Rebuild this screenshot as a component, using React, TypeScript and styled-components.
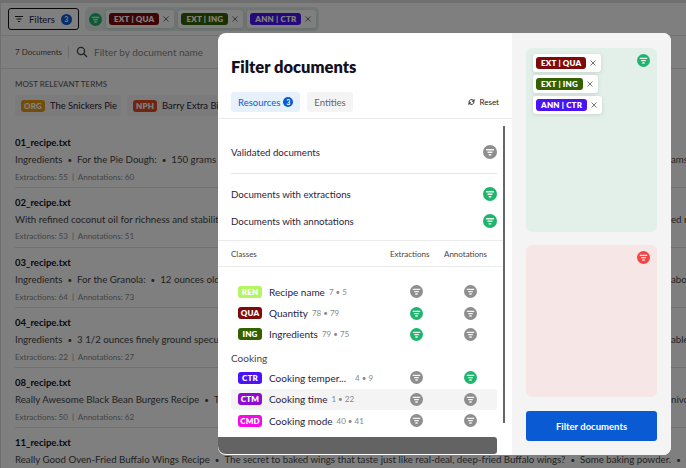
import React from "react";
import styled, { createGlobalStyle } from "styled-components";

const Global = createGlobalStyle`
  html, body { margin: 0; padding: 0; height: 100%; overflow: hidden; background: #fff; }
  * { box-sizing: border-box; }
  body { font-family: "Lato", "Noto Sans", sans-serif; color: #2b2340; }
`;

const Page = styled.div`
  width: 686px;
  height: 468px;
  overflow: hidden;
  position: relative;
  background: #dedede;
  padding: 3px 0 0 1px;
`;

const Content = styled.div`
  background: #fff;
  height: 465px;
  overflow: hidden;
`;

const TopBar = styled.div`
  height: 33px;
  display: flex;
  align-items: center;
  gap: 6px;
  padding-left: 7px;
  border-bottom: 1px solid #e2e2e2;
`;

const FilterButton = styled.div`
  width: 71px;
  height: 22px;
  border: 1px solid #111;
  border-radius: 3px;
  background: #fff;
  display: flex;
  align-items: center;
  gap: 6px;
  padding-left: 6px;
  font-size: 9.5px;
`;

const Count = styled.span<{ $size?: number }>`
  width: ${(p) => p.$size || 11}px;
  height: ${(p) => p.$size || 11}px;
  border-radius: 50%;
  background: #0a5ad4;
  color: #fff;
  font-size: 7px;
  font-weight: 700;
  display: inline-flex;
  align-items: center;
  justify-content: center;
`;

const FilterGroup = styled.div<{ $bg: string }>`
  height: 24px;
  display: flex;
  align-items: center;
  gap: 4px;
  padding: 0 3px 0 4px;
  border-radius: 5px;
  background: ${(p) => p.$bg};
`;

const Pill = styled.div`
  height: 18px;
  display: inline-flex;
  align-items: center;
  gap: 4px;
  padding: 0 5px 0 3px;
  background: #fff;
  border-radius: 3px;
  box-shadow: 0 1px 4px rgba(0, 0, 0, 0.12);
`;

const Tag = styled.span<{ $bg: string; $w?: number }>`
  display: inline-flex;
  align-items: center;
  justify-content: center;
  height: 12px;
  width: ${(p) => (p.$w ? `${p.$w}px` : "auto")};
  padding: 0 5px;
  border-radius: 3px;
  background: ${(p) => p.$bg};
  color: #fff;
  font-size: 8px;
  font-weight: 800;
  letter-spacing: 0.2px;
  white-space: nowrap;
  flex: none;
`;

const SearchBar = styled.div`
  height: 33px;
  display: flex;
  align-items: center;
  padding-left: 14px;
  border-bottom: 1px solid #e2e2e2;
  font-size: 8px;
  color: #555;
`;

const Divider = styled.span`
  width: 1px;
  height: 12px;
  background: #ddd;
  margin: 0 7px 0 6px;
`;

const SearchText = styled.span`
  font-size: 10px;
  color: #888;
  margin-left: 6px;
`;

const Terms = styled.div`
  padding: 10px 0 0 14px;
  height: 59px;
`;

const TermsTitle = styled.div`
  font-size: 8px;
  color: #555;
  margin-bottom: 6px;
`;

const TermRow = styled.div`
  display: flex;
  gap: 6px;
  white-space: nowrap;
`;

const Term = styled.div`
  height: 21px;
  display: flex;
  align-items: center;
  gap: 5px;
  padding: 0 4px 0 6px;
  font-size: 9.4px;
  background: #f6f6f6;
  border-radius: 3px;
`;

const Doc = styled.div`
  height: 60px;
  margin-left: 14px;
  padding-top: 9px;
  border-bottom: 1px solid #e2e2e2;
  white-space: nowrap;
  overflow: hidden;
`;

const DocName = styled.div`
  font-size: 9.5px;
  font-weight: 700;
  color: #111;
  line-height: 11px;
`;

const DocText = styled.div`
  display: flex;
  font-size: 9.7px;
  color: #444;
  line-height: 13px;
  margin-top: 5px;
`;

const DocLead = styled.span<{ $full?: boolean }>`
  flex: none;
  width: ${(p) => (p.$full ? "auto" : "656px")};
  overflow: hidden;
`;

const Dot = styled.span`
  margin: 0 5px;
  font-size: 8px;
`;

const DocMeta = styled.div`
  font-size: 8px;
  color: #888;
  line-height: 10px;
  margin-top: 5px;
  white-space: pre;
`;

const Overlay = styled.div`
  position: absolute;
  inset: 0;
  background: rgba(0, 0, 0, 0.5);
`;

const Modal = styled.div`
  position: absolute;
  left: 218px;
  top: 33px;
  width: 453px;
  height: 422px;
  display: flex;
  background: #fff;
  border-radius: 8px;
  overflow: hidden;
`;

const Main = styled.div`
  width: 294px;
  display: flex;
  flex-direction: column;
  position: relative;
`;

const Header = styled.div`
  height: 86px;
  padding: 22px 13px 0;
  border-bottom: 1px solid #ececec;
`;

const Title = styled.h2`
  margin: 0;
  font-size: 16.5px;
  line-height: 24px;
  font-weight: 800;
  color: #14101f;
`;

const Tabs = styled.div`
  display: flex;
  align-items: center;
  gap: 7px;
  margin-top: 13px;
`;

const Tab = styled.div<{ $active?: boolean }>`
  height: 20px;
  display: flex;
  align-items: center;
  gap: 3px;
  padding: 0 7px;
  border-radius: 3px;
  font-size: 9.5px;
  background: ${(p) => (p.$active ? "#e6f1fb" : "#f4f4f4")};
  color: ${(p) => (p.$active ? "#0a5ad4" : "#666")};
`;

const Reset = styled.div`
  margin-left: auto;
  display: flex;
  align-items: center;
  gap: 4px;
  font-size: 8px;
  color: #222;
`;

const Scrollbar = styled.div`
  position: absolute;
  left: 285px;
  top: 93px;
  width: 2px;
  height: 297px;
  background: #666;
`;

const HScroll = styled.div`
  position: absolute;
  left: 0;
  bottom: 1px;
  width: 279px;
  height: 17px;
  background: #636363;
  border-radius: 0 3px 3px 8px;
`;

const Section = styled.div<{ $h: number; $top: number }>`
  height: ${(p) => p.$h}px;
  margin: 0 15px 0 13px;
  padding-top: ${(p) => p.$top}px;
`;

const Row = styled.div`
  height: 27px;
  display: flex;
  align-items: center;
  justify-content: space-between;
  font-size: 9.7px;
`;

const Rule = styled.div`
  height: 1px;
  background: #e6e6e6;
  margin: 0 15px 0 13px;
`;

const FullRule = styled.div`
  height: 1px;
  background: #ececec;
  width: 285px;
`;

const ClassHead = styled.div`
  height: 26px;
  display: grid;
  grid-template-columns: 145px 40px 43px;
  column-gap: 14px;
  align-items: center;
  padding: 1px 0 0 13px;
  font-size: 8px;
  color: #444;
  border-bottom: 1px solid #ececec;
  width: 285px;
  white-space: nowrap;
`;

const ClassList = styled.div`
  padding-top: 14px;
`;

const ClassRow = styled.div<{ $hover?: boolean }>`
  height: 21.4px;
  margin: 0 15px 0 13px;
  padding-left: 7px;
  display: flex;
  align-items: center;
  font-size: 10px;
  border-radius: 3px;
  background: ${(p) => (p.$hover ? "#f4f4f4" : "transparent")};
`;

const ClassName = styled.div`
  width: 120px;
  margin-left: 7px;
  display: flex;
  align-items: center;
  gap: 4px;
  white-space: nowrap;
`;

const Nums = styled.span<{ $gap?: number }>`
  font-size: 8px;
  color: #888;
  margin-left: ${(p) => p.$gap || 0}px;
`;

const Cell = styled.div`
  width: 54px;
  display: flex;
  justify-content: center;
  flex: none;
`;

const Group = styled.div`
  font-size: 10px;
  color: #444;
  margin: 7px 0 2px 13px;
  line-height: 13px;
`;

const Side = styled.div`
  flex: 1;
  background: #f4f4f4;
  padding: 15px 14px 14px;
  display: flex;
  flex-direction: column;
  gap: 13px;
`;

const Zone = styled.div<{ $bg: string; $h: number }>`
  height: ${(p) => p.$h}px;
  background: ${(p) => p.$bg};
  border-radius: 6px;
  padding: 6px 7px;
  position: relative;
  display: flex;
  flex-direction: column;
  align-items: flex-start;
  gap: 3px;
`;

const ZoneIcon = styled.div`
  position: absolute;
  top: 6px;
  right: 7px;
  display: flex;
`;

const SubmitButton = styled.button`
  margin-top: auto;
  height: 30px;
  border: none;
  border-radius: 3px;
  background: #0a5ad4;
  color: #fff;
  font-family: inherit;
  font-size: 9.5px;
  font-weight: 700;
`;

const Funnel = ({ color, size = 13 }: { color: string; size?: number }) => (
  <svg width={size} height={size} viewBox="0 0 14 14">
    <circle cx="7" cy="7" r="7" fill={color} />
    <path d="M3 4h8v1.4H3zM4.5 6.5h5v1.4h-5zM5.7 9h2.6v1.4H5.7z" fill="#fff" opacity="0.9" />
  </svg>
);

const LinesIcon = () => (
  <svg width="8" height="8" viewBox="0 0 8 8">
    <path d="M0 1.5h8M1.5 4h5M3 6.5h2" stroke="#222" strokeWidth="1" />
  </svg>
);

const SearchIcon = () => (
  <svg width="12" height="12" viewBox="0 0 12 12" fill="none" stroke="#444" strokeWidth="1.3">
    <circle cx="5" cy="5" r="3.6" />
    <path d="M7.8 7.8 11 11" />
  </svg>
);

const ResetIcon = () => (
  <svg width="7" height="8" viewBox="0 0 10 10" fill="none" stroke="#222" strokeWidth="1.3">
    <path d="M1.5 5a3.5 3.5 0 0 1 6-2.4L8.5 4M8.5 5a3.5 3.5 0 0 1-6 2.4L1.5 6" />
    <path d="M8.7 1v3H6M1.3 9V6H4" />
  </svg>
);

const CloseIcon = () => (
  <svg width="6" height="6" viewBox="0 0 6 6">
    <path d="M0.5 0.5l5 5M5.5 0.5l-5 5" stroke="#666" strokeWidth="0.9" />
  </svg>
);

const GREEN = "#1fb56d";
const GRAY = "#8e8e8e";
const RED = "#f44545";

const activeFilters = [
  { label: "EXT | QUA", bg: "#7d0b0b" },
  { label: "EXT | ING", bg: "#336100" },
  { label: "ANN | CTR", bg: "#4a12f5" },
];

const docs = [
  { name: "01_recipe.txt", parts: ["Ingredients", "For the Pie Dough:", "150 grams of all-purpose flour"], tail: "ams", meta: "Extractions: 55  |  Annotations: 60" },
  { name: "02_recipe.txt", parts: ["With refined coconut oil for richness and stability, this recipe keeps"], tail: "ed r", meta: "Extractions: 53  |  Annotations: 51" },
  { name: "03_recipe.txt", parts: ["Ingredients", "For the Granola:", "12 ounces old-fashioned rolled oats"], tail: "abou", meta: "Extractions: 64  |  Annotations: 73" },
  { name: "04_recipe.txt", parts: ["Ingredients", "3 1/2 ounces finely ground speculoos cookies"], tail: "able", meta: "Extractions: 22  |  Annotations: 27" },
  { name: "08_recipe.txt", parts: ["Really Awesome Black Bean Burgers Recipe", "These burgers are hearty"], tail: "nivo", meta: "Extractions: 50  |  Annotations: 62" },
  { name: "11_recipe.txt", parts: ["Really Good Oven-Fried Buffalo Wings Recipe", "The secret to baked wings that taste just like real-deal, deep-fried Buffalo wings?", "Some baking powder.", ""], tail: "", meta: "" },
];

type ClassItem = {
  tag: string;
  bg: string;
  name: string;
  nums: string;
  ext: string;
  ann: string;
  gap?: number;
  hover?: boolean;
};

const groupOne: ClassItem[] = [
  { tag: "REN", bg: "#b5f55f", name: "Recipe name", nums: "7 • 5", ext: GRAY, ann: GRAY },
  { tag: "QUA", bg: "#7d0b0b", name: "Quantity", nums: "78 • 79", ext: GREEN, ann: GRAY },
  { tag: "ING", bg: "#336100", name: "Ingredients", nums: "79 • 75", ext: GREEN, ann: GRAY },
];

const groupTwo: ClassItem[] = [
  { tag: "CTR", bg: "#4a12f5", name: "Cooking temper...", nums: "4 • 9", gap: 5, ext: GRAY, ann: GREEN },
  { tag: "CTM", bg: "#8f0bd0", name: "Cooking time", nums: "1 • 22", ext: GRAY, ann: GRAY, hover: true },
  { tag: "CMD", bg: "#f50bea", name: "Cooking mode", nums: "40 • 41", ext: GRAY, ann: GRAY },
];

const ClassLine = ({ item }: { item: ClassItem }) => (
  <ClassRow $hover={item.hover}>
    <Tag $bg={item.bg} $w={24}>{item.tag}</Tag>
    <ClassName>
      {item.name}
      <Nums $gap={item.gap}>{item.nums}</Nums>
    </ClassName>
    <Cell><Funnel color={item.ext} /></Cell>
    <Cell><Funnel color={item.ann} /></Cell>
  </ClassRow>
);

const FilterPills = () => (
  <>
    {activeFilters.map((f) => (
      <Pill key={f.label}>
        <Tag $bg={f.bg}>{f.label}</Tag>
        <CloseIcon />
      </Pill>
    ))}
  </>
);

export default function App() {
  return (
    <Page>
      <Global />
      <Content>
        <TopBar>
          <FilterButton>
            <LinesIcon />
            Filters
            <Count>3</Count>
          </FilterButton>
          <FilterGroup $bg="#e3f0ea">
            <Funnel color={GREEN} />
            <FilterPills />
          </FilterGroup>
        </TopBar>
        <SearchBar>
          7 Documents
          <Divider />
          <SearchIcon />
          <SearchText>Filter by document name</SearchText>
        </SearchBar>
        <Terms>
          <TermsTitle>MOST RELEVANT TERMS</TermsTitle>
          <TermRow>
            <Term><Tag $bg="#e89a10" $w={24}>ORG</Tag>The Snickers Pie</Term>
            <Term><Tag $bg="#e04a20" $w={24}>NPH</Tag>Barry Extra Bittersweet Chocolate</Term>
          </TermRow>
        </Terms>
        {docs.map((d) => (
          <Doc key={d.name}>
            <DocName>{d.name}</DocName>
            <DocText>
              <DocLead $full={!d.tail}>
                {d.parts.map((part, i) => (
                  <React.Fragment key={i}>
                    {i > 0 && <Dot>•</Dot>}
                    {part}
                  </React.Fragment>
                ))}
              </DocLead>
              {d.tail}
            </DocText>
            <DocMeta>{d.meta}</DocMeta>
          </Doc>
        ))}
      </Content>
      <Overlay />
      <Modal>
        <Main>
          <Header>
            <Title>Filter documents</Title>
            <Tabs>
              <Tab $active>Resources <Count $size={10}>3</Count></Tab>
              <Tab>Entities</Tab>
              <Reset><ResetIcon />Reset</Reset>
            </Tabs>
          </Header>
          <Section $h={54} $top={19}>
            <Row>Validated documents<Funnel color={GRAY} size={14} /></Row>
          </Section>
          <Rule />
          <Section $h={66} $top={6}>
            <Row>Documents with extractions<Funnel color={GREEN} size={14} /></Row>
            <Row>Documents with annotations<Funnel color={GREEN} size={14} /></Row>
          </Section>
          <FullRule />
          <ClassHead>
            <span>Classes</span>
            <span>Extractions</span>
            <span>Annotations</span>
          </ClassHead>
          <ClassList>
            {groupOne.map((c) => <ClassLine key={c.tag} item={c} />)}
            <Group>Cooking</Group>
            {groupTwo.map((c) => <ClassLine key={c.tag} item={c} />)}
          </ClassList>
          <Scrollbar />
          <HScroll />
        </Main>
        <Side>
          <Zone $bg="#e3f0ea" $h={184}>
            <ZoneIcon><Funnel color={GREEN} /></ZoneIcon>
            <FilterPills />
          </Zone>
          <Zone $bg="#f6e6e5" $h={152}>
            <ZoneIcon><Funnel color={RED} /></ZoneIcon>
          </Zone>
          <SubmitButton>Filter documents</SubmitButton>
        </Side>
      </Modal>
    </Page>
  );
}
